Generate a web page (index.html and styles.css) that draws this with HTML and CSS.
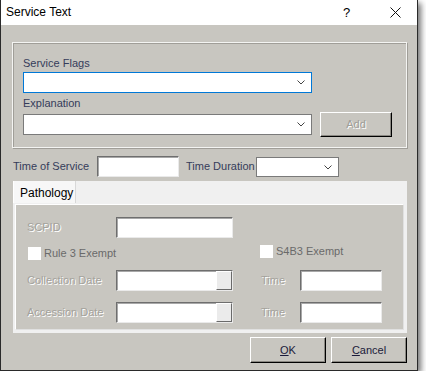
FILE: index.html
```html
<!DOCTYPE html>
<html lang="en">
<head>
  <meta charset="UTF-8">
  <link rel="stylesheet" href="styles.css">
  <title>Service Text</title>
</head>
<body>
  <div class="window">
    <div class="titlebar">
      <span class="caption">Service Text</span>
      <span class="help">?</span>
      <span class="close">
        <svg width="11" height="11" viewBox="0 0 11 11"><path d="M0.5 0.5 L10.5 10.5 M10.5 0.5 L0.5 10.5" stroke="#111" stroke-width="1" fill="none"/></svg>
      </span>
    </div>
    <div class="client">
      <div class="groupbox">
        <div class="label">Service Flags</div>
        <div class="combo combo-focus wide">
          <svg class="chev" width="8" height="5" viewBox="0 0 8 5"><path d="M0.5 0.5 L4 4 L7.5 0.5" stroke="#444" fill="none"/></svg>
        </div>
        <div class="label">Explanation</div>
        <div class="combo-row">
          <div class="combo wide">
            <svg class="chev" width="8" height="5" viewBox="0 0 8 5"><path d="M0.5 0.5 L4 4 L7.5 0.5" stroke="#444" fill="none"/></svg>
          </div>
          <div class="btn btn-add disabled">Add</div>
        </div>
      </div>

      <div class="time-row">
        <span class="label tos-label">Time of Service</span>
        <div class="input tos"></div>
        <span class="label dur-label">Time Duration</span>
        <div class="combo duration">
          <svg class="chev" width="8" height="5" viewBox="0 0 8 5"><path d="M0.5 0.5 L4 4 L7.5 0.5" stroke="#444" fill="none"/></svg>
        </div>
      </div>

      <div class="tabs">
        <div class="tab-strip">
          <div class="tab">Pathology</div>
        </div>
        <div class="page">
          <div class="row">
            <span class="dim col-label">SCPID</span>
            <div class="input field"></div>
          </div>
          <div class="row checks">
            <label class="check rule3"><span class="box"></span>Rule 3 Exempt</label>
            <label class="check s4b3"><span class="box"></span>S4B3 Exempt</label>
          </div>
          <div class="row collection">
            <span class="dim col-label">Collection Date</span>
            <div class="input field date"><span class="drop"></span></div>
            <span class="dim time">Time</span>
            <div class="input tm"></div>
          </div>
          <div class="row accession">
            <span class="dim col-label">Accession Date</span>
            <div class="input field date"><span class="drop"></span></div>
            <span class="dim time">Time</span>
            <div class="input tm"></div>
          </div>
        </div>
      </div>

      <div class="buttons">
        <div class="btn"><u>O</u>K</div>
        <div class="btn"><u>C</u>ancel</div>
      </div>
    </div>
  </div>
</body>
</html>
```

FILE: styles.css
```css
* {
  box-sizing: border-box;
}
html, body {
  margin: 0;
  padding: 0;
  background: #fff;
}
body {
  font-family: "Liberation Sans", Arial, sans-serif;
  font-size: 11px;
  line-height: 13px;
  color: #353c5a;
}
.window {
  width: 418px;
  height: 371px;
  background: #c8c6c0;
  border: 1px solid #2a2a2a;
  border-top: none;
  box-shadow: 3px 3px 6px rgba(0, 0, 0, 0.55);
  display: flex;
  flex-direction: column;
}
.titlebar {
  height: 25px;
  background: #fff;
  display: flex;
  align-items: center;
  padding-left: 5px;
  font-size: 12px;
  color: #000;
}
.caption {
  flex: 1;
}
.help {
  width: 12px;
  margin-right: 35px;
  font-size: 13px;
}
.close {
  display: flex;
  margin-right: 16px;
}
.client {
  flex: 1;
  padding: 17px 10px 0 11px;
  display: flex;
  flex-direction: column;
}
.groupbox {
  height: 106px;
  border: 1px solid #f4f4f2;
  box-shadow: inset 1px 1px 0 #a09e98, 1px 1px 0 #a09e98;
  padding: 14px 0 0 10px;
}
.groupbox .label {
  margin-bottom: 2px;
}
.combo {
  position: relative;
  height: 21px;
  background: #fff;
  border: 1px solid #7a7a7a;
  flex-shrink: 0;
}
.combo.wide {
  width: 289px;
}
.combo-focus {
  border-color: #0078d7;
  margin-bottom: 4px;
}
.chev {
  position: absolute;
  right: 6px;
  top: 7px;
}
.combo-row {
  display: flex;
  align-items: center;
}
.btn {
  width: 76px;
  height: 26px;
  display: flex;
  align-items: center;
  justify-content: center;
  color: #1b1b3a;
  background: #c8c6c0;
  border: 1px solid;
  border-color: #fff #000 #000 #fff;
  box-shadow: inset -1px -1px 0 #8a8882;
}
.btn-add {
  width: 72px;
  height: 25px;
  margin-left: 8px;
}
.disabled {
  color: #a09e98;
  text-shadow: 1px 1px 0 #fff;
}
.time-row {
  display: flex;
  align-items: center;
  margin-top: 8px;
  height: 21px;
}
.time-row .label {
  white-space: nowrap;
  flex-shrink: 0;
}
.tos-label {
  width: 85px;
  padding-left: 1px;
}
.dur-label {
  width: 77px;
  padding-left: 7px;
}
.input {
  height: 21px;
  background: #fff;
  border: 1px solid;
  border-color: #6e6e6e #eaeaea #eaeaea #6e6e6e;
  box-shadow: inset 1px 1px 0 #a8a8a8;
  flex-shrink: 0;
}
.tos {
  width: 82px;
}
.duration {
  width: 83px;
  height: 20px;
}
.tabs {
  margin-top: 4px;
  margin-left: 1px;
  height: 152px;
  background: #f0f0f0;
  padding: 0 3px 3px 0;
  display: flex;
  flex-direction: column;
}
.tab-strip {
  height: 22px;
  display: flex;
}
.tab {
  width: 63px;
  height: 22px;
  padding-left: 6px;
  padding-top: 6px;
  color: #000;
  font-size: 12px;
  background: #f7f7f7;
  border-left: 1px solid #fff;
  border-right: 1px solid #d8d8d8;
}
.page {
  flex: 1;
  margin-top: 1px;
  margin-left: 2px;
  background: #c8c6c0;
  border: 1px solid #fff;
  border-right-color: #e0e0e0;
  border-bottom-color: #e0e0e0;
  padding: 12px 0 0 11px;
}
.row {
  display: flex;
  align-items: center;
  height: 21px;
}
.col-label {
  width: 89px;
}
.dim {
  color: #a4a29c;
  text-shadow: 1px 1px 0 #fff;
}
.field {
  position: relative;
  width: 117px;
}
.time {
  width: 39px;
  margin-left: 28px;
}
.tm {
  width: 82px;
}
.date .drop {
  position: absolute;
  right: 0;
  top: 0;
  width: 16px;
  height: 19px;
  background: #ebebeb;
  border: 1px solid;
  border-color: #fff #6a6a6a #6a6a6a #fff;
}
.checks {
  height: 18px;
  margin-top: 5px;
}
.check {
  display: flex;
  align-items: center;
  color: #6a6a6a;
  white-space: nowrap;
}
.check .box {
  width: 13px;
  height: 13px;
  background: #fff;
  margin-right: 3px;
}
.rule3 {
  width: 233px;
  padding-left: 1px;
  margin-top: 2px;
}
.s4b3 {
  margin-top: -2px;
}
.collection {
  margin-top: 9px;
}
.accession {
  margin-top: 11px;
}
.buttons {
  display: flex;
  justify-content: flex-end;
  gap: 5px;
  margin-top: 4px;
}
```
